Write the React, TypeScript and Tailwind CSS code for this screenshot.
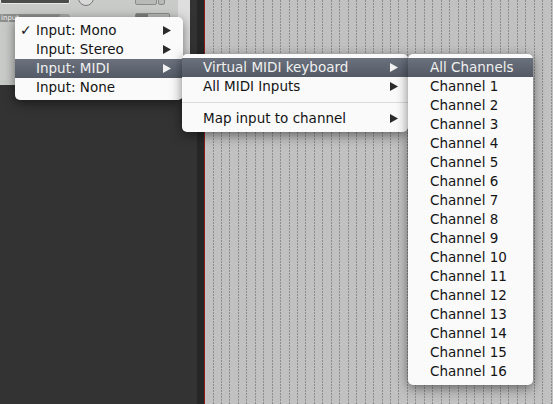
import React from "react";

const Arrow = ({ light }: { light?: boolean }) => (
  <svg width="8" height="9" viewBox="0 0 8 9" className="shrink-0">
    <polygon points="0,0 8,4.5 0,9" fill={light ? "#f2f2f2" : "#2b2b2b"} />
  </svg>
);

type RowProps = {
  label: string;
  hl?: boolean;
  arrow?: boolean;
  check?: boolean;
  pl: string;
  pr: string;
};

function Row({ label, hl, arrow, check, pl, pr }: RowProps) {
  return (
    <div
      className={
        "relative flex h-[19px] items-center justify-between " +
        pl +
        " " +
        pr +
        (hl
          ? " bg-gradient-to-b from-[#6b727e] to-[#535a66] text-[#f0f0f0]"
          : " text-[#141414]")
      }
    >
      {check && (
        <span className="absolute left-[5px] top-[2px] text-[14px] font-bold leading-[15px] text-[#1a1a1a]">
          ✓
        </span>
      )}
      <span className="whitespace-nowrap text-[13.5px] leading-none">{label}</span>
      {arrow && <Arrow light={hl} />}
    </div>
  );
}

const Grid = () => {
  const lines = Array.from({ length: 42 }, (_, i) => Math.round(7.5 + i * 8.45) + 0.5);
  return (
    <svg width="348" height="404" className="block">
      <rect width="348" height="404" fill="#c0c1c0" />
      {lines.map((x) => (
        <line key={x} x1={x} y1="0" x2={x} y2="404" stroke="#8c8d8c" strokeWidth="1" strokeDasharray="2 1" />
      ))}
    </svg>
  );
};

export default function App() {
  const channels = Array.from({ length: 16 }, (_, i) => `Channel ${i + 1}`);
  return (
    <div className="relative flex h-[404px] w-[553px] overflow-hidden font-['DejaVu_Sans',sans-serif]">
      {/* left track panel */}
      <div className="flex w-[197px] flex-col bg-[#333333]">
        <div className="flex h-[85px] w-[190px]">
          <div className="flex w-[178px] flex-col bg-[#c9cbc9]">
            <div className="flex items-start">
              <div className="-mt-[9px] h-[13px] w-[70px] rounded-[2px] border border-[#e8e8e8] bg-[#4b4d4b]" />
              <div className="-mt-[10px] ml-[8px] h-[16px] w-[16px] rounded-full border border-[#777] bg-[#d8d8d8]" />
              <div className="-mt-[8px] ml-[41px] h-[13px] w-[22px] rounded-[2px] border border-[#8a8a8a] bg-[#b8bab8]" />
              <div className="-mt-[8px] ml-[1px] h-[13px] w-[7px] rounded-[2px] border border-[#8a8a8a] bg-[#b8bab8]" />
            </div>
            <div className="mt-[8px] flex items-start">
              <div className="flex h-[8px] w-[70px] items-center justify-between rounded-r-full bg-[#8e908e] pl-[1px]">
                <span className="text-[7px] leading-none text-[#f4f4f4]">input</span>
                <div className="h-[8px] w-[11px] rounded-full bg-[#a8aaa8]" />
              </div>
              <div className="-mt-[1px] ml-[65px] flex h-[9px] w-[35px] rounded-[2px] border border-[#8a8a8a] bg-[#b8bab8]">
                <div className="w-[12px] bg-[#7d7f7d]" />
              </div>
            </div>
          </div>
          <div className="w-[12px] bg-[#dedede]" />
        </div>
        <div className="flex-1" />
      </div>
      <div className="w-[7px] bg-[#262626]" />
      <div className="w-px bg-[#8a1c1c]" />
      <div className="flex-1">
        <Grid />
      </div>

      {/* Menu 1 */}
      <div className="absolute left-[15px] top-[17px] w-[168px] rounded-[5px] rounded-tl-[2px] bg-[#fafafa] pt-[4px] pb-[3px] shadow-[0_3px_12px_rgba(0,0,0,0.5)]">
        <Row label="Input: Mono" check arrow pl="pl-[21px]" pr="pr-[12px]" />
        <Row label="Input: Stereo" arrow pl="pl-[21px]" pr="pr-[12px]" />
        <Row label="Input: MIDI" hl arrow pl="pl-[21px]" pr="pr-[12px]" />
        <Row label="Input: None" pl="pl-[21px]" pr="pr-[12px]" />
      </div>

      {/* Menu 2 */}
      <div className="absolute left-[182px] top-[54px] w-[226px] rounded-[5px] bg-[#fafafa] py-[4px] shadow-[0_3px_12px_rgba(0,0,0,0.5)]">
        <Row label="Virtual MIDI keyboard" hl arrow pl="pl-[21px]" pr="pr-[10px]" />
        <Row label="All MIDI Inputs" arrow pl="pl-[21px]" pr="pr-[10px]" />
        <div className="flex h-[13px] items-center">
          <div className="h-px w-full bg-[#dadada]" />
        </div>
        <Row label="Map input to channel" arrow pl="pl-[21px]" pr="pr-[10px]" />
      </div>

      {/* Menu 3 */}
      <div className="absolute left-[408px] top-[54px] w-[125px] rounded-[5px] bg-[#fafafa] py-[4px] shadow-[0_3px_12px_rgba(0,0,0,0.5)]">
        <Row label="All Channels" hl pl="pl-[22px]" pr="pr-[8px]" />
        {channels.map((c) => (
          <Row key={c} label={c} pl="pl-[22px]" pr="pr-[8px]" />
        ))}
      </div>
    </div>
  );
}
